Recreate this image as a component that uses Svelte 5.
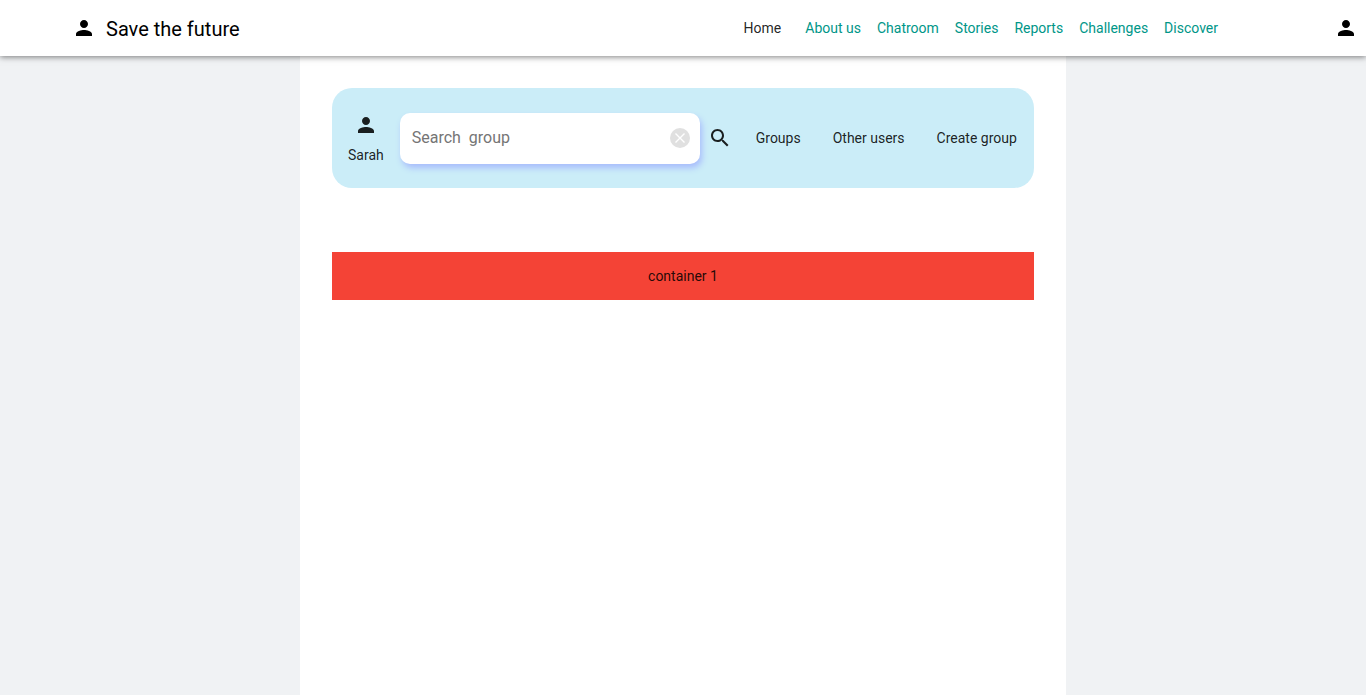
<script>
  const links = ['About us', 'Chatroom', 'Stories', 'Reports', 'Challenges', 'Discover'];
  const actions = ['Groups', 'Other users', 'Create group'];
  let query = $state('');
</script>

{#snippet person()}
  <svg class="icon" viewBox="0 0 24 24" aria-hidden="true">
    <path d="M12 12c2.21 0 4-1.79 4-4s-1.79-4-4-4-4 1.79-4 4 1.79 4 4 4zm0 2c-2.67 0-8 1.34-8 4v2h16v-2c0-2.66-5.33-4-8-4z" />
  </svg>
{/snippet}

<div class="page">
  <header>
    <a class="brand" href="#home">
      {@render person()}
      <span>Save the future</span>
    </a>
    <nav>
      <a class="current" href="#home">Home</a>
      {#each links as link}
        <a href="#{link}">{link}</a>
      {/each}
    </nav>
    <button class="account" aria-label="Account">{@render person()}</button>
  </header>

  <main>
    <section class="toolbar">
      <div class="user">
        {@render person()}
        <span>Sarah</span>
      </div>
      <form class="search" onsubmit={(e) => e.preventDefault()}>
        <div class="field">
          <input type="text" placeholder="Search  group" aria-label="Search group" bind:value={query} />
          <button type="button" class="clear" aria-label="Clear" onclick={() => (query = '')}>
            <svg viewBox="0 0 20 20" aria-hidden="true">
              <circle cx="10" cy="10" r="10" fill="#e0e0e0" />
              <path d="M5.5 5.5l9 9M14.5 5.5l-9 9" stroke="#fff" stroke-width="1.4" />
            </svg>
          </button>
        </div>
        <button type="submit" aria-label="Search">
          <svg class="icon" viewBox="0 0 24 24" aria-hidden="true">
            <path d="M15.5 14h-.79l-.28-.27C15.41 12.59 16 11.11 16 9.5 16 5.91 13.09 3 9.5 3S3 5.91 3 9.5 5.91 16 9.5 16c1.61 0 3.09-.59 4.23-1.57l.27.28v.79l5 4.99L20.49 19l-4.99-5zm-6 0C7.01 14 5 11.99 5 9.5S7.01 5 9.5 5 14 7.01 14 9.5 11.99 14 9.5 14z" />
          </svg>
        </button>
      </form>
      <div class="actions">
        {#each actions as action}
          <button>{action}</button>
        {/each}
      </div>
    </section>

    <section class="container">container 1</section>
  </main>
</div>

<style>
  .page {
    display: flex;
    flex-direction: column;
    min-height: 100vh;
    background: #f0f2f4;
    color: rgba(0, 0, 0, 0.87);
    font: 400 14px/16px Roboto, sans-serif;
    -webkit-font-smoothing: antialiased;
  }

  .icon {
    display: block;
    flex: none;
    width: 24px;
    height: 24px;
    fill: currentColor;
  }

  a {
    color: inherit;
    text-decoration: none;
  }

  button {
    padding: 0;
    border: 0;
    background: none;
    color: inherit;
    font: inherit;
    white-space: nowrap;
    cursor: pointer;
  }

  header {
    position: relative;
    display: flex;
    align-items: center;
    height: 56px;
    padding: 0 8px 0 72px;
    background: #fff;
    color: #000;
    box-shadow: 0 1px 6px rgba(0, 0, 0, 0.5);
  }

  .brand {
    display: flex;
    align-items: center;
    gap: 10px;
    margin-right: auto;
    font-size: 20px;
    line-height: 24px;
  }

  .brand span {
    padding-top: 2px;
  }

  nav {
    display: flex;
    gap: 16px;
    margin-right: 116px;
    color: #009688;
  }

  .current {
    margin-right: 8px;
    color: rgba(0, 0, 0, 0.87);
  }

  main {
    box-sizing: border-box;
    flex: 1;
    margin: 0 300px;
    padding: 32px;
    background: #fff;
  }

  .toolbar {
    display: flex;
    align-items: center;
    gap: 16px;
    min-height: 100px;
    padding: 0 16px;
    border-radius: 20px;
    background: #cbedf8;
  }

  .user {
    display: flex;
    flex-direction: column;
    align-items: center;
    gap: 10px;
  }

  .search {
    display: flex;
    flex: 0 1 332px;
    align-items: center;
    gap: 8px;
  }

  .field {
    display: flex;
    flex: 1;
    align-items: center;
    box-sizing: border-box;
    min-width: 0;
    height: 51px;
    padding: 0 10px 0 12px;
    border-radius: 10px;
    background: #fff;
    box-shadow: 2px 4px 6px #a8bcfc;
  }

  input {
    flex: 1;
    min-width: 0;
    padding: 0;
    border: 0;
    outline: 0;
    background: none;
    color: inherit;
    font: 400 16px/20px Roboto, sans-serif;
  }

  input::placeholder {
    color: #757575;
  }

  .clear svg {
    display: block;
    width: 20px;
    height: 20px;
  }

  .actions {
    display: flex;
    gap: 32px;
    padding-left: 8px;
  }

  .container {
    margin-top: 64px;
    padding: 16px;
    background: #f44336;
    text-align: center;
  }
</style>
